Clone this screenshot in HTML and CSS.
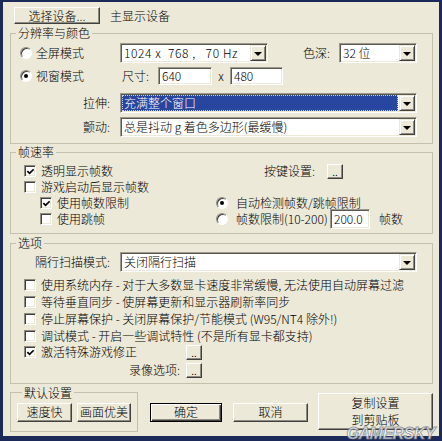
FILE: index.html
```html
<!DOCTYPE html>
<html>
<head>
<meta charset="utf-8">
<link rel="stylesheet" href="styles.css">
</head>
<body>
<div class="dlg">
  <div class="toprow">
    <button class="btn btn-dev">选择设备...</button>
    <span class="devname">主显示设备</span>
  </div>

  <fieldset class="grp g1">
    <legend>分辨率与颜色</legend>
    <div class="row r1">
      <div class="c1"><span class="radio"></span><span class="rtext">全屏模式</span></div>
      <div class="sel w-res"><span class="val pre">1024 x  768 ,   70 Hz</span><span class="arrow"></span></div>
      <span class="lbl-depth">色深:</span>
      <div class="sel w-depth"><span class="val">32 位</span><span class="arrow"></span></div>
    </div>
    <div class="row r2">
      <div class="c1"><span class="radio on"></span><span class="rtext">视窗模式</span></div>
      <span class="lbl-size">尺寸:</span>
      <div class="inp w-640">640</div>
      <span class="times">x</span>
      <div class="inp w-480">480</div>
    </div>
    <div class="row r3">
      <div class="c1 right">拉伸:</div>
      <div class="sel w-full"><span class="val hl">充满整个窗口</span><span class="arrow"></span></div>
    </div>
    <div class="row r4">
      <div class="c1 right">颤动:</div>
      <div class="sel w-full"><span class="val">总是抖动 g 着色多边形(最缓慢)</span><span class="arrow"></span></div>
    </div>
  </fieldset>

  <fieldset class="grp g2">
    <legend>帧速率</legend>
    <div class="fgrid">
      <div class="frow"><span class="chk on"><svg viewBox="0 0 10 10"><path d="M1.5 4.5 L4 7 L8.5 2.5" /></svg></span><span class="ctext">透明显示帧数</span></div>
      <div class="frow keyset"><span class="lbl-key">按键设置:</span><button class="btn mini">..</button></div>
      <div class="frow"><span class="chk"></span><span class="ctext">游戏启动后显示帧数</span></div>
      <div class="frow"></div>
      <div class="frow indent"><span class="chk on"><svg viewBox="0 0 10 10"><path d="M1.5 4.5 L4 7 L8.5 2.5" /></svg></span><span class="ctext">使用帧数限制</span></div>
      <div class="frow rad"><span class="radio on"></span><span class="rtext2">自动检测帧数/跳帧限制</span></div>
      <div class="frow indent"><span class="chk"></span><span class="ctext">使用跳帧</span></div>
      <div class="frow rad"><span class="radio"></span><span class="rtext2 lim">帧数限制(10-200)</span><div class="inp w-fps">200.0</div><span class="fps">帧数</span></div>
    </div>
  </fieldset>

  <fieldset class="grp g3">
    <legend>选项</legend>
    <div class="row ri">
      <div class="c1 right">隔行扫描模式:</div>
      <div class="sel w-full"><span class="val">关闭隔行扫描</span><span class="arrow"></span></div>
    </div>
    <div class="orow first"><span class="chk"></span><span class="ctext">使用系统内存 - 对于大多数显卡速度非常缓慢, 无法使用自动屏幕过滤</span></div>
    <div class="orow"><span class="chk"></span><span class="ctext">等待垂直同步 - 使屏幕更新和显示器刷新率同步</span></div>
    <div class="orow"><span class="chk"></span><span class="ctext">停止屏幕保护 - 关闭屏幕保护/节能模式 (W95/NT4 除外!)</span></div>
    <div class="orow"><span class="chk"></span><span class="ctext">调试模式 - 开启一些调试特性 (不是所有显卡都支持)</span></div>
    <div class="orow"><span class="chk on"><svg viewBox="0 0 10 10"><path d="M1.5 4.5 L4 7 L8.5 2.5" /></svg></span><span class="ctext fix">激活特殊游戏修正</span><button class="btn mini">..</button></div>
    <div class="orow rec"><span class="lbl-rec">录像选项:</span><button class="btn mini">..</button></div>
  </fieldset>

  <div class="bottom">
    <fieldset class="grp g4">
      <legend>默认设置</legend>
      <div class="defs">
        <button class="btn b-fast">速度快</button>
        <button class="btn b-nice">画面优美</button>
      </div>
    </fieldset>
    <button class="btn btn-ok">确定</button>
    <button class="btn btn-cancel">取消</button>
    <button class="btn btn-copy"><span class="copytext">复制设置<br>到剪贴板</span></button>
  </div>
</div>
<div class="watermark">GAMERSKY</div>
</body>
</html>
```

FILE: styles.css
```css
html, body {
  margin: 0;
  padding: 0;
}
body {
  position: relative;
  width: 442px;
  height: 441px;
  box-sizing: border-box;
  padding: 2px 3px 5px 3px;
  background: #1b2a58;
  font-family: "Noto Sans CJK SC", "Noto Sans", sans-serif;
  font-size: 12px;
  font-weight: 300;
  line-height: 14px;
  color: #000;
  overflow: hidden;
}
.dlg {
  height: 434px;
  box-sizing: border-box;
  background: #ece9d8;
  padding: 0 6px 0 7px;
  display: flex;
  flex-direction: column;
}

/* generic controls */
.btn {
  font: inherit;
  color: #000;
  margin: 0;
  padding: 0;
  background: #ece9d8;
  box-sizing: border-box;
  border: 1px solid;
  border-color: #fff #404040 #404040 #fff;
  box-shadow: inset -1px -1px 0 #8e8c80;
  display: flex;
  align-items: center;
  justify-content: center;
  appearance: none;
}
.mini {
  width: 16px;
  height: 15px;
  line-height: 8px;
  align-items: flex-end;
  padding-bottom: 3px;
  font-size: 11px;
}
.sel, .inp {
  box-sizing: border-box;
  background: #fff;
  border: 1px solid;
  border-color: #9d9a8c #fff #fff #9d9a8c;
  box-shadow: inset 1px 1px 0 #5a5850, inset -1px -1px 0 #ece9d8;
  padding: 1px;
  display: flex;
  align-items: center;
}
.sel {
  height: 20px;
}
.inp {
  height: 18px;
  padding-left: 3px;
}
.val {
  flex: 1;
  height: 100%;
  display: flex;
  align-items: center;
  padding-left: 2px;
  white-space: nowrap;
  overflow: hidden;
}
.pre {
  white-space: pre;
  letter-spacing: 0.6px;
}
.val.hl {
  background: #28469f;
  color: #fff;
  outline: 1px dotted #c9cfe6;
  outline-offset: -1px;
  margin-right: 1px;
}
.arrow {
  width: 16px;
  height: 100%;
  box-sizing: border-box;
  background: #ece9d8;
  border: 1px solid;
  border-color: #ece9d8 #404040 #404040 #ece9d8;
  box-shadow: inset 1px 1px 0 #fff, inset -1px -1px 0 #8e8c80;
  display: flex;
  align-items: center;
  justify-content: center;
}
.arrow::after {
  content: "";
  width: 0;
  height: 0;
  border-left: 4px solid transparent;
  border-right: 4px solid transparent;
  border-top: 4px solid #000;
  margin-top: 1px;
}
.radio {
  width: 12px;
  height: 12px;
  box-sizing: border-box;
  border-radius: 50%;
  background: #fff;
  border: 1px solid;
  border-color: #8e8c80 #fff #fff #8e8c80;
  box-shadow: inset 1px 1px 0 #404040;
  display: inline-flex;
  align-items: center;
  justify-content: center;
  flex: none;
}
.radio.on::after {
  content: "";
  width: 4px;
  height: 4px;
  border-radius: 50%;
  background: #000;
}
.chk {
  width: 12px;
  height: 12px;
  box-sizing: border-box;
  background: #fff;
  border: 1px solid;
  border-color: #8e8c80 #fff #fff #8e8c80;
  box-shadow: inset 1px 1px 0 #404040, inset -1px -1px 0 #ece9d8;
  display: inline-flex;
  align-items: center;
  justify-content: center;
  flex: none;
}
.chk svg {
  width: 9px;
  height: 9px;
}
.chk path {
  fill: none;
  stroke: #000;
  stroke-width: 1.9;
}

/* top row */
.toprow {
  margin-top: 5px;
  height: 17px;
  display: flex;
  align-items: center;
}
.btn-dev {
  margin-left: 4px;
  width: 86px;
  height: 17px;
}
.devname {
  margin-left: 10px;
}

/* group boxes */
.grp {
  margin: 0;
  padding: 0;
  border: 1px solid #c3c0ae;
  min-width: 0;
}
.grp legend {
  padding: 0 2px;
  margin-left: 5px;
  height: 14px;
  line-height: 14px;
}
.g1 {
  margin-top: 2px;
  padding-bottom: 6px;
}
.row {
  display: flex;
  align-items: center;
}
.c1 {
  width: 109px;
  flex: none;
  display: flex;
  align-items: center;
  box-sizing: border-box;
}
.c1 .radio {
  margin-left: 9px;
}
.rtext {
  margin-left: 4px;
}
.c1.right {
  justify-content: flex-end;
  padding-right: 10px;
}
.r1 { margin-top: 3px; height: 20px; }
.r2 { margin-top: 4px; height: 18px; }
.r3 { margin-top: 8px; height: 20px; }
.r4 { margin-top: 4px; height: 20px; }
.w-res { width: 148px; }
.lbl-depth { width: 36px; margin-left: 35px; }
.w-depth { width: 78px; }
.lbl-size { width: 36px; margin-left: 2px; }
.w-640 { width: 54px; }
.times { width: 18px; text-align: center; }
.w-480 { width: 53px; }
.w-full { width: 297px; }

/* frame rate */
.g2 {
  margin-top: 1px;
  padding-top: 4px;
  padding-bottom: 6px;
}
.fgrid {
  display: grid;
  grid-template-columns: 204px 1fr;
  grid-auto-rows: 16px;
}
.frow {
  display: flex;
  align-items: center;
}
.frow > .chk {
  margin-left: 13px;
}
.frow.indent > .chk {
  margin-left: 29px;
}
.ctext {
  margin-left: 5px;
  white-space: nowrap;
}
.keyset {
  padding-left: 49px;
}
.lbl-key {
  width: 63px;
}
.rad .radio {
  margin-left: 1px;
}
.rtext2 {
  margin-left: 8px;
  white-space: nowrap;
}
.rtext2.lim {
  width: 94px;
}
.w-fps {
  width: 40px;
  height: 20px;
  flex: none;
}
.fps {
  margin-left: 9px;
}

/* options */
.g3 {
  margin-top: 2px;
  padding-bottom: 4px;
}
.ri {
  margin-top: 2px;
  height: 20px;
}
.orow {
  height: 16.75px;
  display: flex;
  align-items: center;
}
.orow.first {
  margin-top: 5px;
}
.orow > .chk {
  margin-left: 13px;
}
.ctext.fix {
  width: 145px;
}
.orow.rec {
  margin-top: 1px;
  height: 17px;
}
.lbl-rec {
  width: 175px;
  text-align: right;
  padding-right: 6px;
  box-sizing: border-box;
}

/* bottom */
.bottom {
  margin-top: 2px;
  display: flex;
  align-items: flex-start;
}
.g4 {
  width: 128px;
  box-sizing: border-box;
  padding: 3px 0 9px 6px;
}
.defs {
  display: flex;
  gap: 5px;
}
.b-fast { width: 55px; height: 19px; }
.b-nice { width: 54px; height: 19px; }
.btn-ok {
  margin-left: 12px;
  margin-top: 17px;
  width: 72px;
  height: 19px;
  border: 1px solid #000;
  box-shadow: inset 1px 1px 0 #fff, inset -1px -1px 0 #404040, inset -2px -2px 0 #8e8c80;
}
.btn-cancel {
  margin-left: 11px;
  margin-top: 17px;
  width: 75px;
  height: 19px;
}
.btn-copy {
  margin-left: 10px;
  margin-top: 7px;
  width: 115px;
  height: 37px;
}
.copytext {
  display: block;
  text-align: center;
  line-height: 17.5px;
}

.watermark {
  position: absolute;
  right: 7px;
  bottom: 0;
  font-family: "Liberation Sans", sans-serif;
  font-weight: bold;
  font-style: italic;
  font-size: 16px;
  line-height: 15px;
  letter-spacing: -0.5px;
  color: rgba(255, 255, 255, 0.75);
  -webkit-text-stroke: 1px rgba(110, 115, 130, 0.7);
}
```
